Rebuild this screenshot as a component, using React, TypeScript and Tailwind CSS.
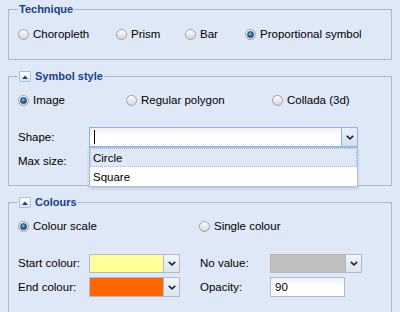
import type { ReactNode } from "react";

const Radio = ({ label, checked = false }: { label: string; checked?: boolean }) => (
  <label className="flex h-[14px] items-center gap-[4px] whitespace-nowrap">
    <span className="flex h-[11px] w-[11px] shrink-0 items-center justify-center rounded-full border border-[#a2a2a2] bg-gradient-to-b from-white to-[#d6d6d6]">
      {checked && (
        <span className="h-[7px] w-[7px] rounded-full border border-[#0f3e63] bg-[radial-gradient(circle_at_40%_35%,#7cc3ea,#1f6fa3_55%,#103f66)]" />
      )}
    </span>
    {label}
  </label>
);

const CollapseButton = () => (
  <span className="flex h-[11px] w-[12px] items-center justify-center rounded-[1px] border border-[#a9bfdf] bg-gradient-to-b from-white to-[#d9e5f5]">
    <svg width="6" height="4" viewBox="0 0 6 4">
      <path d="M0 4 L3 0.5 L6 4 Z" fill="#15428b" />
    </svg>
  </span>
);

const Chevron = () => (
  <svg width="8" height="5" viewBox="0 0 8 5">
    <path d="M0.8 0.8 L4 3.8 L7.2 0.8" fill="none" stroke="#1f2f4a" strokeWidth="1.8" />
  </svg>
);

const Trigger = ({ focused = false }: { focused?: boolean }) => (
  <span
    className={
      focused
        ? "flex h-full w-[16px] shrink-0 items-center justify-center border border-l-0 border-[#8fb3dd] bg-gradient-to-b from-[#eaf1fa] to-[#d2e0f2]"
        : "flex h-full w-[16px] shrink-0 items-center justify-center border border-l-0 border-[#b5b8c8] bg-gradient-to-b from-[#f3f6fa] to-[#dde5ef]"
    }
  >
    <Chevron />
  </span>
);

const Fieldset = ({
  title,
  collapsible = false,
  className = "",
  children,
}: {
  title: string;
  collapsible?: boolean;
  className?: string;
  children: ReactNode;
}) => (
  <fieldset className={`border border-[#b5b8c8] pl-[9px] pr-2 ${className}`}>
    <legend className="flex h-[13px] items-center gap-[4px] px-[1px] font-['Liberation_Sans',Arial,sans-serif] text-[11px] leading-[13px] font-bold text-[#15428b]">
      {collapsible && <CollapseButton />}
      {title}
    </legend>
    {children}
  </fieldset>
);

export default function App() {
  return (
    <div className="h-[312px] w-[400px] overflow-hidden bg-[#dfe8f6] px-2 pt-[3px] font-['Liberation_Sans',Arial,sans-serif] text-[11.5px] leading-[14px] text-black">
      <Fieldset title="Technique" className="pt-[11px] pb-[18px]">
        <div className="grid grid-cols-[98px_69px_60px_auto]">
          <Radio label="Choropleth" />
          <Radio label="Prism" />
          <Radio label="Bar" />
          <Radio label="Proportional symbol" checked />
        </div>
      </Fieldset>

      <Fieldset title="Symbol style" collapsible className="mt-[10px] pt-[10px] pb-[14px]">
        <div className="grid grid-cols-[108px_146px_auto]">
          <Radio label="Image" checked />
          <Radio label="Regular polygon" />
          <Radio label="Collada (3d)" />
        </div>
        <div className="mt-[20px] flex flex-col gap-[4px]">
          <div className="flex h-[20px] items-center">
            <span className="w-[71px]">Shape:</span>
            <div className="relative flex h-[20px] w-[269px]">
              <div className="flex flex-1 items-center border border-[#8fb3dd] bg-gradient-to-b from-[#eef0f2] to-white to-40%">
                <span className="ml-[4px] h-[14px] w-[1px] bg-black" />
              </div>
              <Trigger focused />
              <ul className="absolute top-[20px] left-0 z-10 w-[269px] border border-[#a6c0e3] bg-white shadow-[0_2px_3px_rgba(0,0,0,0.12)]">
                <li className="flex h-[19px] items-center border border-dotted border-[#a3bae9] bg-[#dfe8f6] pl-[2px]">Circle</li>
                <li className="flex h-[19px] items-center pl-[3px]">Square</li>
              </ul>
            </div>
          </div>
          <div className="flex h-[20px] items-center">
            <span className="w-[71px]">Max size:</span>
            <div className="h-[20px] w-[75px] border border-[#b5b8c8] bg-white" />
          </div>
        </div>
      </Fieldset>

      <Fieldset title="Colours" collapsible className="mt-[10px] pt-[10px] pb-[20px]">
        <div className="grid grid-cols-[181px_auto]">
          <Radio label="Colour scale" checked />
          <Radio label="Single colour" />
        </div>
        <div className="mt-[20px] grid grid-cols-[182px_auto] gap-y-[4px]">
          <div className="flex h-[20px] items-center">
            <span className="w-[71px]">Start colour:</span>
            <div className="flex h-[19px]">
              <span className="w-[75px] border border-[#b5b8c8] bg-[#ffff99]" />
              <Trigger />
            </div>
          </div>
          <div className="flex h-[20px] items-center">
            <span className="w-[70px]">No value:</span>
            <div className="flex h-[19px]">
              <span className="w-[76px] border border-[#b5b8c8] bg-[#c0c0c0]" />
              <Trigger />
            </div>
          </div>
          <div className="flex h-[20px] items-center">
            <span className="w-[71px]">End colour:</span>
            <div className="flex h-[20px]">
              <span className="w-[75px] border border-[#b5b8c8] bg-[#ff6600]" />
              <Trigger />
            </div>
          </div>
          <div className="flex h-[20px] items-center">
            <span className="w-[70px]">Opacity:</span>
            <div className="flex h-[20px] w-[75px] items-center border border-[#b5b8c8] bg-gradient-to-b from-[#eef0f2] to-white to-40% pl-[4px]">
              90
            </div>
          </div>
        </div>
      </Fieldset>
    </div>
  );
}
